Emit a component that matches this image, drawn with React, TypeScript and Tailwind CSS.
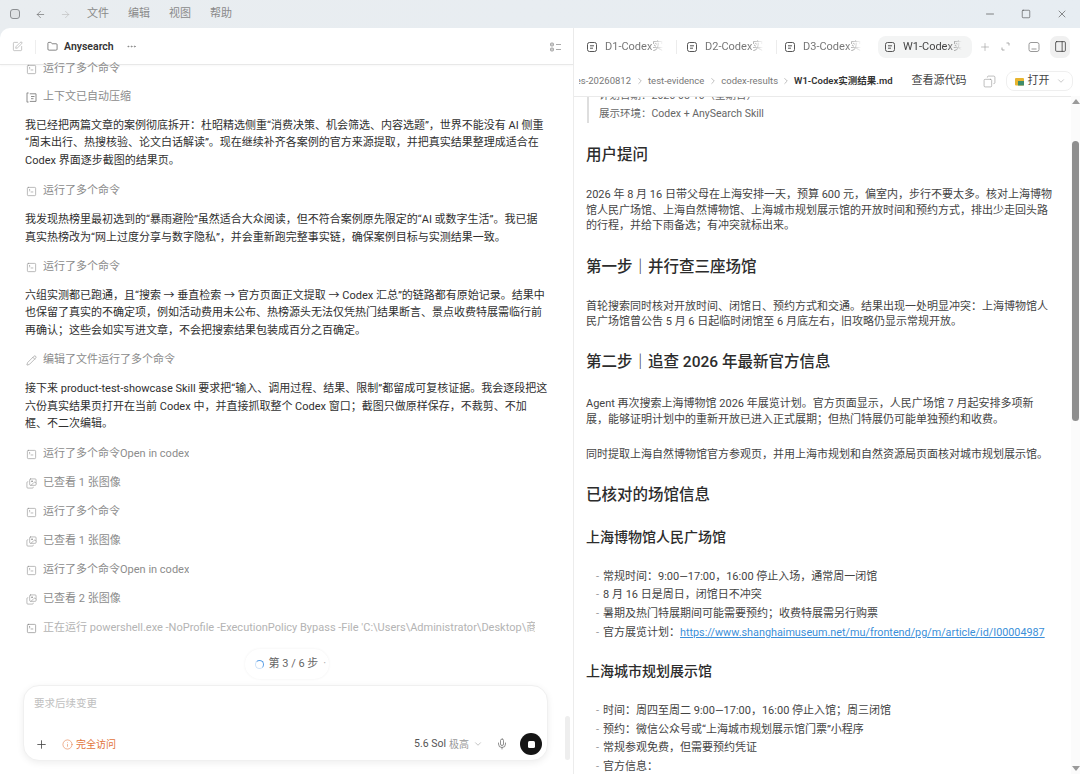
import { ChevronDown, ChevronRight, Ellipsis, Folder, Images, Mic, Minus, Pencil, Plus, Square, SquarePen, SquareTerminal, X, ArrowLeft, ArrowRight, Info, PanelRight, Copy } from "lucide-react";
import type { ReactNode } from "react";

const font = "font-['Roboto','Noto_Sans_CJK_SC',sans-serif]";

function FileIcon() {
  return (
    <svg width="12" height="12" viewBox="0 0 12 12" fill="none" stroke="#555" strokeWidth="1" className="shrink-0">
      <rect x="1.5" y="1.5" width="9" height="9" rx="2" />
      <path d="M4 4.8h4M4 7.2h3" />
    </svg>
  );
}

function CompressIcon() {
  return (
    <svg width="11" height="11" viewBox="0 0 11 11" fill="none" stroke="#8c8c8c" strokeWidth="1" className="shrink-0">
      <path d="M1 .8v9.4M1 1h1.6M1 10h1.6M3.8 1.8H10v7.6H3.8M5 4.5h3.5M5 6.7h2.5" />
    </svg>
  );
}

function Row({ kind, text, faded, className }: { kind: "cmd" | "img" | "edit" | "ctx"; text: string; faded?: boolean; className?: string }) {
  return (
    <div className={`flex h-[18px] shrink-0 items-center gap-[6px] pl-px text-[11px] whitespace-nowrap ${faded ? "text-[#b4b4b4]" : "text-[#8c8c8c]"} ${className ?? ""}`}>
      {kind === "cmd" && <SquareTerminal size={11} strokeWidth={1.3} color={faded ? "#777" : "#8c8c8c"} className="shrink-0" />}
      {kind === "img" && <Images size={11} strokeWidth={1.3} color="#8c8c8c" className="shrink-0" />}
      {kind === "edit" && <Pencil size={11} strokeWidth={1.3} color="#8c8c8c" className="shrink-0" />}
      {kind === "ctx" && <CompressIcon />}
      <span className="overflow-hidden">{text}</span>
    </div>
  );
}

function Para({ lines, className }: { lines: string[]; className?: string }) {
  return (
    <div className={`shrink-0 text-[11px] leading-[17.4px] text-[#2f2f2f] whitespace-nowrap ${className ?? ""}`}>
      {lines.map((l) => (
        <div key={l}>{l}</div>
      ))}
    </div>
  );
}

function Tab({ label, active, className }: { label: string; active?: boolean; className?: string }) {
  return (
    <div className={`flex h-[22px] w-[94px] shrink-0 items-center gap-[7px] rounded-[8px] pl-[6px] text-[11px] whitespace-nowrap ${active ? "bg-[#f3f4f4] text-[#444]" : "text-[#777]"} ${className ?? ""}`}>
      <FileIcon />
      <span className="w-[60px] overflow-hidden pt-px [mask-image:linear-gradient(to_right,black_72%,transparent_98%)]">{label}</span>
    </div>
  );
}

function H2({ children, className }: { children: ReactNode; className?: string }) {
  return <div className={`text-[15.5px] leading-[22px] font-medium text-[#2c2c2c] whitespace-nowrap ${className ?? ""}`}>{children}</div>;
}

function H3({ children, className }: { children: ReactNode; className?: string }) {
  return <div className={`text-[14px] leading-[20px] font-medium text-[#2c2c2c] whitespace-nowrap ${className ?? ""}`}>{children}</div>;
}

function Body({ lines, className }: { lines: string[]; className?: string }) {
  return (
    <div className={`text-[11px] leading-[15.6px] text-[#444] whitespace-nowrap ${className ?? ""}`}>
      {lines.map((l) => (
        <div key={l}>{l}</div>
      ))}
    </div>
  );
}

function Li({ children }: { children: ReactNode }) {
  return (
    <div className="flex h-[18.6px] items-center pl-[10px] text-[11px] text-[#444] whitespace-nowrap">
      <span className="w-[7px] text-[#999]">-</span>
      <span>{children}</span>
    </div>
  );
}

export default function App() {
  return (
    <div className={`${font} flex h-[774px] w-[1080px] flex-col overflow-hidden bg-gradient-to-r from-[#e9edf0] to-[#e7edf2]`}>
      <div className="flex h-[28px] shrink-0 items-center text-[11px] text-[#8a8f94]">
        <div className="ml-[10px] h-[10px] w-[10px] rounded-[3px] border border-[#8c8f92] bg-[#dfe2e4]" />
        <ArrowLeft size={11} strokeWidth={1.4} className="ml-[15px] text-[#666]" />
        <ArrowRight size={11} strokeWidth={1.4} className="ml-[14px] text-[#bbb]" />
        <div className="ml-[16px] flex gap-[19px] pt-px text-[#8a8a8a]">
          <span>文件</span>
          <span>编辑</span>
          <span>视图</span>
          <span>帮助</span>
        </div>
        <div className="ml-auto flex items-center gap-[25px] pr-[12px] text-[#444]">
          <Minus size={12} strokeWidth={1.3} />
          <Square size={10} strokeWidth={1.4} />
          <X size={12} strokeWidth={1.2} />
        </div>
      </div>

      <div className="flex min-h-0 flex-1 overflow-hidden rounded-tl-[10px] bg-white">
        {/* left */}
        <div className="relative flex w-[574px] shrink-0 flex-col border-r border-[#ececec]">
          <div className="flex h-[37px] shrink-0 items-center border-b border-[#e8e8e8] pt-[1px] pl-[12px] shadow-[0_1px_2px_rgba(0,0,0,0.03)]">
            <SquarePen size={11} strokeWidth={1.2} className="text-[#999]" />
            <div className="ml-[12px] h-[14px] w-px bg-[#eee]" />
            <Folder size={11} strokeWidth={1.4} className="ml-[11px] text-[#444]" />
            <span className="ml-[6px] pt-px text-[10.5px] font-semibold text-[#333]">Anysearch</span>
            <Ellipsis size={11} className="ml-[12px] text-[#888]" />
            <svg width="11" height="10" viewBox="0 0 11 10" fill="none" stroke="#aaa" strokeWidth="1" className="mr-[12px] ml-auto">
              <rect x=".5" y="1" width="3" height="3" rx=".8" fill="#ccc" />
              <rect x=".5" y="6" width="3" height="3" rx=".8" fill="#ccc" />
              <path d="M6 2.5h5M6 7.5h5" />
            </svg>
          </div>

          <div className="-mt-[5px] flex min-h-0 flex-1 flex-col gap-[11px] overflow-hidden pr-[29px] pl-[25px]">
            <Row kind="cmd" text="运行了多个命令" />
            <Row kind="ctx" text="上下文已自动压缩" className="-mt-[1px]" />
            <Para
              lines={[
                "我已经把两篇文章的案例彻底拆开\uFF1A杜昭精选侧重“消费决策、机会筛选、内容选题”\uFF0C世界不能没有 AI 侧重",
                "“周末出行、热搜核验、论文白话解读”。现在继续补齐各案例的官方来源提取\uFF0C并把真实结果整理成适合在",
                "Codex 界面逐步截图的结果页。",
              ]}
            />
            <Row kind="cmd" text="运行了多个命令" className="mt-[2px]" />
            <Para
              lines={[
                "我发现热榜里最初选到的“暴雨避险”虽然适合大众阅读\uFF0C但不符合案例原先限定的“AI 或数字生活”。我已据",
                "真实热榜改为“网上过度分享与数字隐私”\uFF0C并会重新跑完整事实链\uFF0C确保案例目标与实测结果一致。",
              ]}
            />
            <Row kind="cmd" text="运行了多个命令" className="mt-[1px]" />
            <Para
              lines={[
                "六组实测都已跑通\uFF0C且“搜索 → 垂直检索 → 官方页面正文提取 → Codex 汇总”的链路都有原始记录。结果中",
                "也保留了真实的不确定项\uFF0C例如活动费用未公布、热榜源头无法仅凭热门结果断言、景点收费特展需临行前",
                "再确认\uFF1B这些会如实写进文章\uFF0C不会把搜索结果包装成百分之百确定。",
              ]}
            />
            <Row kind="edit" text="编辑了文件运行了多个命令" className="mt-[1px]" />
            <Para
              lines={[
                "接下来 product-test-showcase Skill 要求把“输入、调用过程、结果、限制”都留成可复核证据。我会逐段把这",
                "六份真实结果页打开在当前 Codex 中\uFF0C并直接抓取整个 Codex 窗口\uFF1B截图只做原样保存\uFF0C不裁剪、不加",
                "框、不二次编辑。",
              ]}
            />
            <Row kind="cmd" text="运行了多个命令Open in codex" className="mt-[2px]" />
            <Row kind="img" text="已查看 1 张图像" />
            <Row kind="cmd" text="运行了多个命令" />
            <Row kind="img" text="已查看 1 张图像" />
            <Row kind="cmd" text="运行了多个命令Open in codex" />
            <Row kind="img" text="已查看 2 张图像" />
            <Row kind="cmd" faded className="w-[510px] overflow-hidden" text="正在运行 powershell.exe -NoProfile -ExecutionPolicy Bypass -File 'C:\Users\Administrator\Desktop\商标" />
          </div>

          <div className="flex h-[30px] shrink-0 justify-center">
            <div className="flex h-[30px] w-[84px] items-center gap-[5px] rounded-full bg-white pl-[10px] text-[11px] text-[#666] shadow-[0_0_3px_rgba(0,0,0,0.06)]">
              <div className="h-[9px] w-[9px] rounded-full border-[1.5px] border-[#cfe3f8] border-t-[#5a9fe6] border-r-[#5a9fe6]" />
              第 3 / 6 步<span className="text-[#aaa]">·</span>
            </div>
          </div>

          <div className="mt-[6px] mr-[25px] mb-[13px] ml-[23px] flex h-[76px] shrink-0 flex-col justify-between rounded-[16px] border border-[#f0f0f0] bg-white pt-[10px] pr-[5px] pb-[5px] pl-[10px] shadow-[0_2px_7px_rgba(0,0,0,0.07)]">
            <div className="text-[10.5px] text-[#c0c0c0]">要求后续变更</div>
            <div className="flex items-center">
              <Plus size={13} strokeWidth={1.5} className="ml-[1px] text-[#444]" />
              <Info size={11} strokeWidth={1.2} className="ml-[14px] text-[#e2743b]" />
              <span className="ml-[3px] text-[10px] text-[#e2743b]">完全访问</span>
              <span className="ml-auto text-[10.5px] text-[#555]">5.6 Sol</span>
              <span className="ml-[3px] text-[10px] text-[#999]">极高</span>
              <ChevronDown size={10} strokeWidth={1.2} className="ml-[4px] text-[#888]" />
              <Mic size={12} strokeWidth={1.3} className="ml-[13px] text-[#555]" />
              <div className="ml-[12px] flex h-[22px] w-[22px] items-center justify-center rounded-full bg-[#151515]">
                <div className="h-[7px] w-[7px] rounded-[1.5px] bg-white" />
              </div>
            </div>
          </div>

          <div className="absolute top-[688px] right-[3px] h-[44px] w-[5px] rounded-full bg-[#eeeeee]" />
        </div>

        {/* right */}
        <div className="relative flex min-w-0 flex-1 flex-col">
          <div className="flex h-[37px] shrink-0 items-center pl-[6px]">
            <Tab label="D1-Codex实测结果" />
            <div className="mr-[3px] ml-[2px] h-[14px] w-px bg-[#ececec]" />
            <Tab label="D2-Codex实测结果" />
            <div className="mr-[1px] ml-[2px] h-[14px] w-px bg-[#ececec]" />
            <Tab label="D3-Codex实测结果" />
            <Tab label="W1-Codex实测结果" active className="ml-[6px]" />
            <Plus size={12} strokeWidth={1.2} className="ml-[7px] text-[#999]" />
            <svg width="9" height="9" viewBox="0 0 9 9" fill="none" stroke="#aaa" strokeWidth="1" className="ml-[10px]">
              <path d="M5.5 1H8v2.5M3.5 8H1V5.5" />
            </svg>
            <svg width="12" height="12" viewBox="0 0 12 12" fill="none" stroke="#999" strokeWidth="1" className="ml-[18px]">
              <rect x="1" y="1.5" width="10" height="9" rx="2" />
              <path d="M3.5 8h5" />
            </svg>
            <div className="ml-[10px] flex h-[22px] w-[20px] items-center justify-center rounded-[7px] bg-[#f0f0f0]">
              <PanelRight size={13} strokeWidth={1.4} className="text-[#333]" />
            </div>
          </div>

          <div className="flex h-[32px] shrink-0 items-center border-b border-[#eaeaea] pt-px text-[9.5px] whitespace-nowrap text-[#777]">
            <div className="ml-[5px] flex w-[52px] justify-end overflow-hidden">
              <span>es-20260812</span>
            </div>
            <ChevronRight size={10} strokeWidth={1.3} className="mx-[3.5px] text-[#888]" />
            <span>test-evidence</span>
            <ChevronRight size={10} strokeWidth={1.3} className="mx-[3.5px] text-[#888]" />
            <span>codex-results</span>
            <ChevronRight size={10} strokeWidth={1.3} className="mx-[3px] text-[#888]" />
            <span className="font-semibold text-[#333]">W1-Codex实测结果.md</span>
            <span className="ml-[19px] text-[11px] text-[#444]">查看源代码</span>
            <Copy size={13} strokeWidth={1} className="ml-[16px] -scale-x-100 text-[#888]" />
            <div className="ml-[10px] flex h-[20px] w-[67px] shrink-0 items-center rounded-[8px] border border-[#efefef] pl-[8px] text-[11px] text-[#444]">
              <svg width="9" height="9" viewBox="0 0 9 9" className="shrink-0">
                <rect y="1" width="9" height="7.5" rx="1" fill="#e8b52e" />
                <rect x="3" y="4" width="6" height="4.5" fill="#3f8c6b" />
              </svg>
              <span className="ml-[4px]">打开</span>
              <ChevronDown size={10} strokeWidth={1.1} className="ml-[6px] text-[#888]" />
            </div>
          </div>

          <div className="min-h-0 flex-1 overflow-hidden pl-[12px]">
            <div className="-mt-[10px] ml-[1px] border-l-2 border-[#dedede] pl-[10px] text-[10.5px] leading-[18px] whitespace-nowrap text-[#666]">
              <div>{"计划日期\uFF1A2026-08-16\uFF08星期日\uFF09"}</div>
              <div>{"展示环境\uFF1ACodex + AnySearch Skill"}</div>
            </div>
            <H2 className="mt-[21px]">用户提问</H2>
            <Body
              className="mt-[21px]"
              lines={[
                "2026 年 8 月 16 日带父母在上海安排一天\uFF0C预算 600 元\uFF0C偏室内\uFF0C步行不要太多。核对上海博物",
                "馆人民广场馆、上海自然博物馆、上海城市规划展示馆的开放时间和预约方式\uFF0C排出少走回头路",
                "的行程\uFF0C并给下雨备选\uFF1B有冲突就标出来。",
              ]}
            />
            <H2 className="mt-[22px]">{"第一步\uFF5C并行查三座场馆"}</H2>
            <Body
              className="mt-[21px]"
              lines={[
                "首轮搜索同时核对开放时间、闭馆日、预约方式和交通。结果出现一处明显冲突\uFF1A上海博物馆人",
                "民广场馆曾公告 5 月 6 日起临时闭馆至 6 月底左右\uFF0C旧攻略仍显示常规开放。",
              ]}
            />
            <H2 className="mt-[21px]">{"第二步\uFF5C追查 2026 年最新官方信息"}</H2>
            <Body
              className="mt-[23px]"
              lines={[
                "Agent 再次搜索上海博物馆 2026 年展览计划。官方页面显示\uFF0C人民广场馆 7 月起安排多项新",
                "展\uFF0C能够证明计划中的重新开放已进入正式展期\uFF1B但热门特展仍可能单独预约和收费。",
              ]}
            />
            <Body className="mt-[20px]" lines={["同时提取上海自然博物馆官方参观页\uFF0C并用上海市规划和自然资源局页面核对城市规划展示馆。"]} />
            <H2 className="mt-[21px]">已核对的场馆信息</H2>
            <H3 className="mt-[21px]">上海博物馆人民广场馆</H3>
            <div className="mt-[21px]">
              <Li>{"常规时间\uFF1A9:00—17:00\uFF0C16:00 停止入场\uFF0C通常周一闭馆"}</Li>
              <Li>{"8 月 16 日是周日\uFF0C闭馆日不冲突"}</Li>
              <Li>{"暑期及热门特展期间可能需要预约\uFF1B收费特展需另行购票"}</Li>
              <Li>
                {"官方展览计划\uFF1A"}
                <span className="text-[10.8px] text-[#3b8fd9] underline">https://www.shanghaimuseum.net/mu/frontend/pg/m/article/id/I00004987</span>
              </Li>
            </div>
            <H3 className="mt-[19px]">上海城市规划展示馆</H3>
            <div className="mt-[21px]">
              <Li>{"时间\uFF1A周四至周二 9:00—17:00\uFF0C16:00 停止入馆\uFF1B周三闭馆"}</Li>
              <Li>{"预约\uFF1A微信公众号或“上海城市规划展示馆门票”小程序"}</Li>
              <Li>{"常规参观免费\uFF0C但需要预约凭证"}</Li>
              <Li>{"官方信息\uFF1A"}</Li>
            </div>
          </div>

          <div className="absolute top-[68px] right-0 flex h-[678px] w-[9px] flex-col items-center bg-[#fbfbfb]">
            <div className="mt-[3px] h-0 w-0 border-x-[4px] border-b-[5px] border-x-transparent border-b-[#9a9a9a]" />
            <div className="mt-[37px] h-[280px] w-[7px] rounded-full bg-[#8f8f8f]" />
            <div className="mt-auto mb-[3px] h-0 w-0 border-x-[4px] border-t-[5px] border-x-transparent border-t-[#9a9a9a]" />
          </div>
        </div>
      </div>
    </div>
  );
}
